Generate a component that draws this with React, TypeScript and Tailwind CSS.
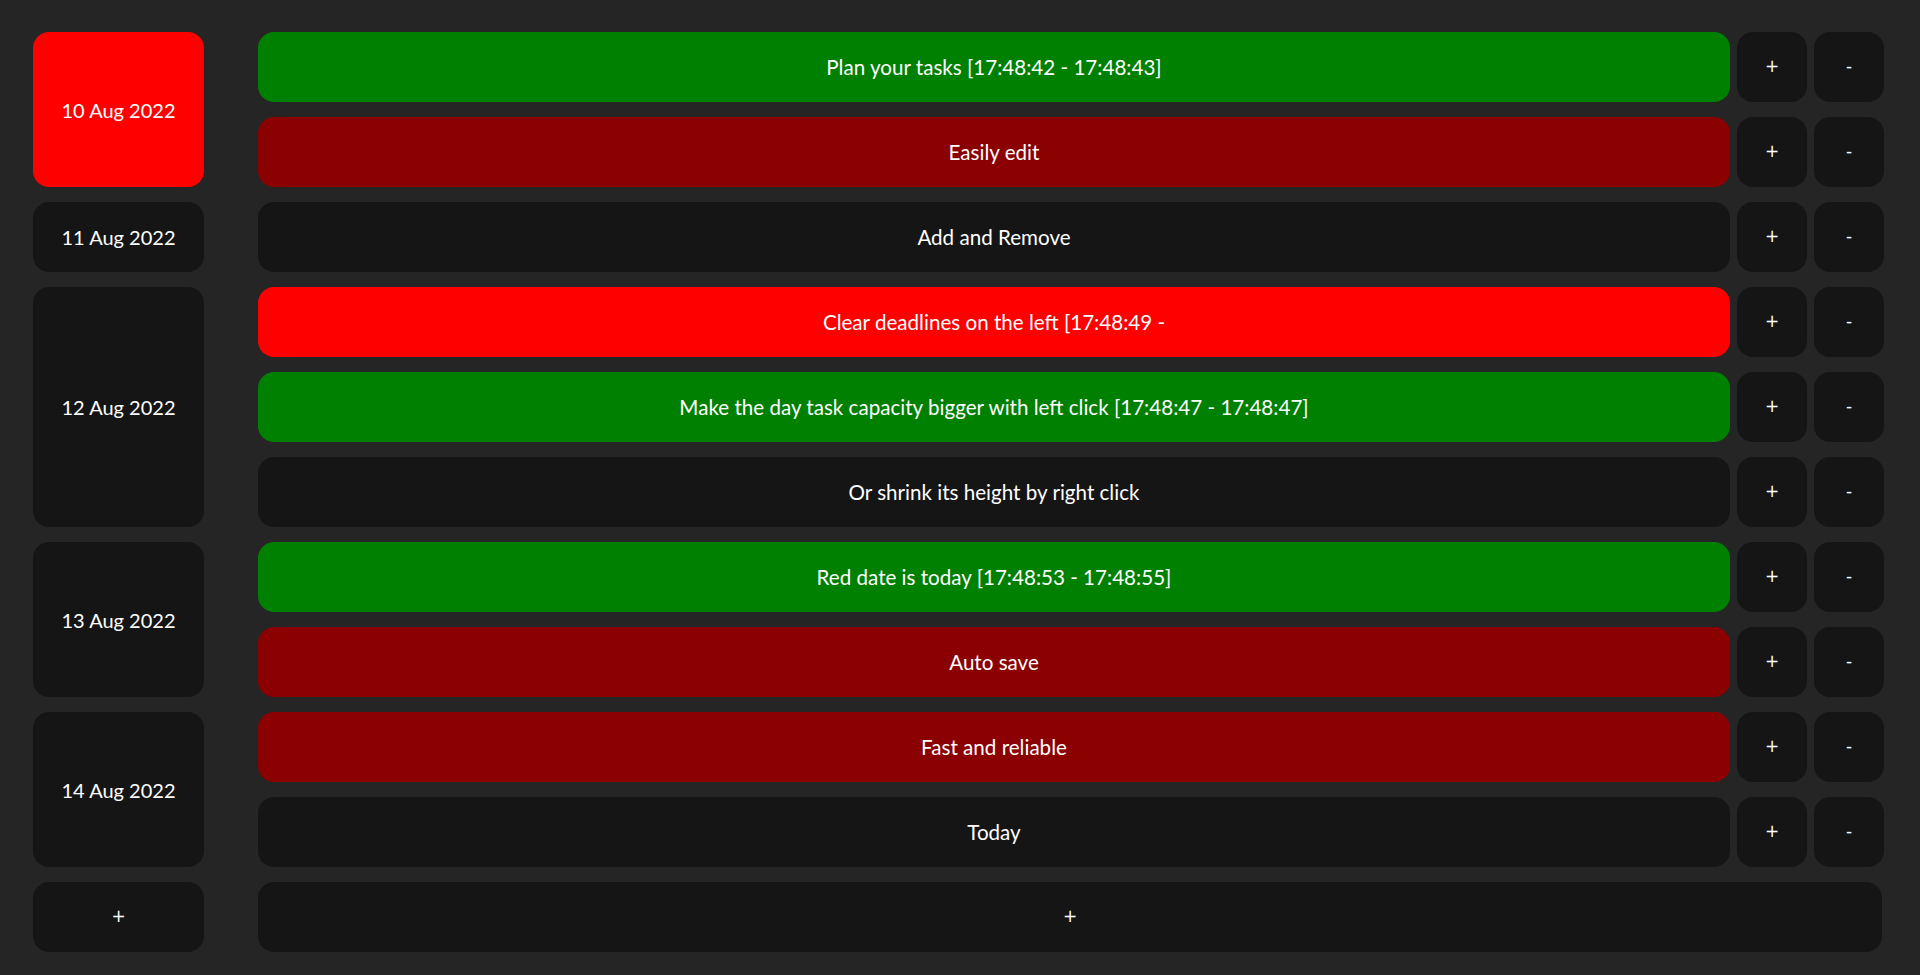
import React from "react";

type Task = { text: string; color: string };

const days: { date: string; span: string; today?: boolean }[] = [
  { date: "10 Aug 2022", span: "row-span-2", today: true },
  { date: "11 Aug 2022", span: "row-span-1" },
  { date: "12 Aug 2022", span: "row-span-3" },
  { date: "13 Aug 2022", span: "row-span-2" },
  { date: "14 Aug 2022", span: "row-span-2" },
];

const tasks: Task[] = [
  { text: "Plan your tasks [17:48:42 - 17:48:43]", color: "bg-[#008000]" },
  { text: "Easily edit", color: "bg-[#8b0000]" },
  { text: "Add and Remove", color: "bg-[#151515]" },
  { text: "Clear deadlines on the left [17:48:49 -", color: "bg-[#ff0000]" },
  { text: "Make the day task capacity bigger with left click [17:48:47 - 17:48:47]", color: "bg-[#008000]" },
  { text: "Or shrink its height by right click", color: "bg-[#151515]" },
  { text: "Red date is today [17:48:53 - 17:48:55]", color: "bg-[#008000]" },
  { text: "Auto save", color: "bg-[#8b0000]" },
  { text: "Fast and reliable", color: "bg-[#8b0000]" },
  { text: "Today", color: "bg-[#151515]" },
];

const font = { fontFamily: "Lato, 'Noto Sans', sans-serif" };
const symFont = { fontFamily: "'DejaVu Sans', sans-serif" };

export default function App() {
  return (
    <div className="min-h-[975px] w-full bg-[#252525] pl-[33px] pr-[36px] pt-[32px] pb-[23px] text-white" style={font}>
      <div className="grid grid-cols-[171px_1fr] auto-rows-[70px] gap-x-[54px] gap-y-[15px]">
        <div className="col-start-1 row-start-1 row-span-10 grid grid-rows-subgrid">
          {days.map((d) => (
            <div
              key={d.date}
              className={`${d.span} flex items-center justify-center rounded-2xl text-[20px] ${d.today ? "bg-[#ff0000]" : "bg-[#151515]"}`}
            >
              {d.date}
            </div>
          ))}
        </div>
        <div className="col-start-2 row-start-1 row-span-10 grid grid-rows-subgrid">
          {tasks.map((t, i) => (
            <div key={i} className="flex gap-[7px]">
              <div className={`flex flex-1 items-center justify-center rounded-2xl text-[20.6px] ${t.color}`}>{t.text}</div>
              <div className="flex w-[70px] items-center justify-center rounded-2xl bg-[#151515] text-[17px]" style={symFont}>+</div>
              <div className="flex w-[70px] items-center justify-center rounded-2xl bg-[#151515] text-[17px]" style={symFont}>-</div>
            </div>
          ))}
        </div>
        <div className="col-start-1 flex items-center justify-center rounded-2xl bg-[#151515] text-[17px]" style={symFont}>+</div>
        <div className="col-start-2 mr-[2px] flex items-center justify-center rounded-2xl bg-[#151515] text-[17px]" style={symFont}>+</div>
      </div>
    </div>
  );
}
